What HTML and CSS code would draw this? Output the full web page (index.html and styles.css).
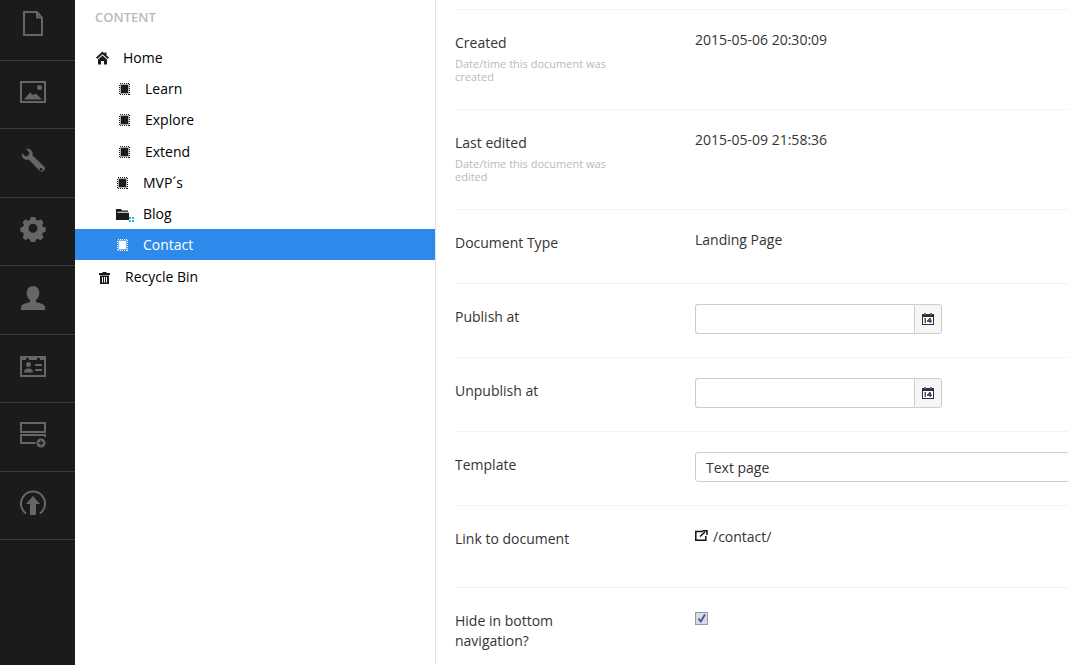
FILE: index.html
```html
<!DOCTYPE html>
<html lang="en">
<head>
<meta charset="utf-8">
<title>Contact</title>
<link rel="stylesheet" href="styles.css">
</head>
<body>
<div class="app">
  <nav class="rail">
    <a class="rail-item rail-first"><svg class="rail-icon" viewBox="0 0 30 30"><path d="M6 4h13l5 6v17H6z M19 5v4.500h4" fill="none" stroke="currentColor" stroke-width="2" stroke-linejoin="round"/></svg></a>
    <a class="rail-item"><svg class="rail-icon" viewBox="0 0 30 30"><rect x="3" y="5" width="24" height="20" fill="none" stroke="currentColor" stroke-width="2"/><path d="M6 22.500l6-7 3 2.500 3-1.500 6 6z" fill="currentColor"/><circle cx="21.500" cy="10.500" r="2.500" fill="currentColor"/></svg></a>
    <a class="rail-item"><svg class="rail-icon" viewBox="0 0 30 30"><path d="M4 8l3.500 3.500 3-1 1-3L8 4c3.500-.8 7.500 2 6.500 6.500L26 21.300c2.800 3-1.500 7.200-4.500 4.500L10.700 14.500C6.500 16 3 12 4 8z" fill="currentColor"/><circle cx="23" cy="24.500" r="1.400" fill="#1b1b1b"/></svg></a>
    <a class="rail-item"><svg class="rail-icon" viewBox="0 0 30 30"><path transform="translate(1.500 1.300) scale(.9)" fill="currentColor" fill-rule="evenodd" d="M12.500 2h5l.8 3 2.300 1 2.800-1.600 3.300 3.300-1.600 2.800 1 2.300 2.900.7v5l-2.900.7-1 2.300 1.600 2.800-3.300 3.300-2.800-1.600-2.300 1-.8 2.800h-5l-.8-2.800-2.300-1-2.800 1.600-3.300-3.300 1.600-2.800-1-2.300-2.900-.7v-5l2.900-.7 1-2.300-1.600-2.800 3.300-3.300 2.800 1.600 2.300-1zM15 9.500a5 5 0 1 0 0 10 5 5 0 0 0 0-10z"/></svg></a>
    <a class="rail-item"><svg class="rail-icon" viewBox="0 0 30 30"><path fill="currentColor" d="M15 4c4 0 6.300 3 6.300 7 0 3-1.200 5.500-3.300 7v2c3.500 1 8.500 2 9 4.500V28H3v-3.500C3.500 22 8.500 21 12 20v-2c-2.100-1.500-3.300-4-3.300-7 0-4 2.300-7 6.300-7z"/></svg></a>
    <a class="rail-item"><svg class="rail-icon" viewBox="0 0 30 30"><path d="M3 6h24v19H3z" fill="none" stroke="currentColor" stroke-width="2"/><path d="M4 7h4v2H4zM11 7h8v2h-8zM22 7h4v2h-4zM17 13h7v2h-7zM17 18h7v2h-7z" fill="currentColor"/><circle cx="10.500" cy="13.500" r="2.500" fill="currentColor"/><path d="M6 21.500c0-3 2-4 4.500-4s4.500 1 4.500 4z" fill="currentColor"/></svg></a>
    <a class="rail-item"><svg class="rail-icon" viewBox="0 0 30 30"><rect x="3" y="4" width="24" height="9" fill="none" stroke="currentColor" stroke-width="2"/><path d="M27 18v-2H3v8h15" fill="none" stroke="currentColor" stroke-width="2"/><circle cx="23" cy="24" r="5.500" fill="#1b1b1b"/><circle cx="23" cy="24" r="4.500" fill="currentColor"/><path d="M20.500 24h5M23 21.500v5" stroke="#1b1b1b" stroke-width="1.300"/></svg></a>
    <a class="rail-item"><svg class="rail-icon" viewBox="0 0 30 30"><path d="M8.200 25.500a12 12 0 1 1 13.600 0" fill="none" stroke="currentColor" stroke-width="2"/><path d="M15 8l7 8h-4v11h-6V16H8z" fill="currentColor"/></svg></a>
  </nav>

  <aside class="tree">
    <h5 class="tree-title">CONTENT</h5>
    <ul class="tree-list">
      <li class="node lvl-root"><svg class="node-icon" viewBox="0 0 14 14"><path d="M7.500 .5L1 6.500 2.200 8l5.300-4.800L12.800 8 14 6.500l-2.500-2.300V1.500h-2v1z" fill="#1b1b1b"/><path d="M3 8.500l4.500-4 4.500 4V13.500H9V10H6v3.500H3z" fill="#1b1b1b"/></svg><span>Home</span></li>
      <li class="node lvl-a"><svg class="node-icon" viewBox="0 0 14 14"><use href="#dots"/></svg><span>Learn</span></li>
      <li class="node lvl-a"><svg class="node-icon" viewBox="0 0 14 14"><use href="#dots"/></svg><span>Explore</span></li>
      <li class="node lvl-a"><svg class="node-icon" viewBox="0 0 14 14"><use href="#dots"/></svg><span>Extend</span></li>
      <li class="node lvl-b"><svg class="node-icon" viewBox="0 0 14 14"><use href="#dots"/></svg><span>MVP´s</span></li>
      <li class="node lvl-b"><svg class="node-icon node-folder" viewBox="0 0 16 14"><path d="M1 2h5l1 1.500h6v1.200H2.500v1H14V13H1z" fill="#1b1b1b"/><path d="M14 10h2v2h-2zM17 10h2v2h-2zM14 13h2v2h-2zM17 13h2v2h-2z" fill="#2bb4d8"/></svg><span>Blog</span></li>
      <li class="node lvl-b node-active"><svg class="node-icon" viewBox="0 0 14 14"><use href="#dots"/></svg><span>Contact</span></li>
      <li class="node lvl-bin"><svg class="node-icon" viewBox="0 0 14 14"><path d="M5.500 2h4v1H13v2H2V3h3.500zM3 5.500h9V14H3zM5 7v5.500h1V7zM7 7v5.500h1V7zM9 7v5.500h1V7z" fill="#1b1b1b" fill-rule="evenodd"/></svg><span>Recycle Bin</span></li>
    </ul>
    <svg class="defs" width="0" height="0"><defs><g id="dots" shape-rendering="crispEdges"><rect x="3" y="2" width="9" height="10" fill="currentColor" opacity=".35"/><rect x="4" y="3" width="7" height="8" fill="currentColor"/><rect x="2.500" y="1.500" width="10" height="11" fill="none" stroke="currentColor" stroke-dasharray="1 1"/></g></defs></svg>
  </aside>

  <main class="props">
    <section class="row row-tall">
      <div class="label"><div class="label-name">Created</div><small class="label-help">Date/time this document was created</small></div>
      <div class="value">2015-05-06 20:30:09</div>
    </section>
    <section class="row row-tall">
      <div class="label"><div class="label-name">Last edited</div><small class="label-help">Date/time this document was edited</small></div>
      <div class="value">2015-05-09 21:58:36</div>
    </section>
    <section class="row">
      <div class="label"><div class="label-name">Document Type</div></div>
      <div class="value">Landing Page</div>
    </section>
    <section class="row">
      <div class="label"><div class="label-name">Publish at</div></div>
      <div class="value"><div class="date"><input class="date-input" type="text"><span class="date-btn"><svg class="cal" viewBox="0 0 12 12"><use href="#cal"/></svg></span></div></div>
    </section>
    <section class="row">
      <div class="label"><div class="label-name">Unpublish at</div></div>
      <div class="value"><div class="date"><input class="date-input" type="text"><span class="date-btn"><svg class="cal" viewBox="0 0 12 12"><use href="#cal"/></svg></span></div></div>
    </section>
    <section class="row">
      <div class="label"><div class="label-name">Template</div></div>
      <div class="value"><div class="select">Text page</div></div>
    </section>
    <section class="row row-link">
      <div class="label"><div class="label-name">Link to document</div></div>
      <div class="value value-link"><svg class="ext" viewBox="0 0 13 11"><path d="M8 1.500H.8v8.700h10V6" fill="none" stroke="#111" stroke-width="1.500"/><path d="M5 6.500L10 2M7.500 .8H12v4.200" fill="none" stroke="#111" stroke-width="1.500"/></svg><span>/contact/</span></div>
    </section>
    <section class="row">
      <div class="label"><div class="label-name">Hide in bottom navigation?</div></div>
      <div class="value"><span class="check"><svg viewBox="0 0 11 11"><path d="M2.500 5.500l2.300 3L9 1.500" fill="none" stroke="#3f51a8" stroke-width="1.800"/></svg></span></div>
    </section>
    <svg class="defs" width="0" height="0"><defs><g id="cal"><path d="M0 1h12v11H0z" fill="#2b2f3a"/><rect x="1" y="4" width="10" height="7" fill="#fff"/><path d="M2 0h2v2H2zM8 0h2v2H8z" fill="#6d6a5f"/><path d="M2.500 5h1.500v5H2.500zM7.500 5H9v2.500h1V9H9v1H7.500V9H5V7.500z" fill="#3d5070"/></g></defs></svg>
  </main>
</div>
</body>
</html>
```
FILE: styles.css
```css
* { box-sizing: border-box; }
html, body { margin: 0; height: 100%; overflow: hidden; }
body { font-family: "Open Sans", "Liberation Sans", sans-serif; font-size: 14px; line-height: 20px; color: #343434; background: #fff; }
.app { display: flex; height: 665px; }

.rail { width: 75px; flex: none; background: #1b1b1b; overflow: hidden; }
.rail-item { display: flex; align-items: center; height: 68.5px; padding: 0 0 5px 18px; border-bottom: 1px solid #3a3a3a; color: #666; }
.rail-first { margin-top: -8px; }
.rail-icon { width: 30px; height: 30px; display: block; }

.tree { width: 361px; flex: none; border-right: 1px solid #e1e1e1; padding-top: 8px; }
.tree-title { margin: 0 0 0 20px; font-size: 13px; line-height: 18px; font-weight: 600; color: #bbb; }
.tree-list { list-style: none; margin: 15.800px 0 0; padding: 0; }
.node { display: flex; align-items: center; height: 31.25px; padding-top: .75px; color: #000; }
.node-icon { width: 14px; height: 14px; margin-right: 14px; flex: none; color: #1b1b1b; }
.node-folder { width: 16px; overflow: visible; }
.node-folder + span { margin-left: -2px; }
.lvl-root { padding-left: 20px; }
.lvl-a { padding-left: 42px; }
.lvl-b { padding-left: 40px; }
.lvl-bin { padding-left: 22px; }
.node-active { background: #2e8aea; color: #fff; height: 31px; margin-bottom: .25px; }
.node-active .node-icon { color: #fff; }
.defs { position: absolute; }

.props { flex: 1; min-width: 0; overflow: hidden; padding: 9px 0 0 19px; }
.row { display: flex; min-height: 74px; padding-top: 20px; border-top: 1px solid #f3f3f3; }
.row-tall { min-height: 100px; }
.row-link { min-height: 82px; }
.label { width: 240px; flex: none; padding: 3px 80px 0 0; color: #343434; }
.label-help { display: block; font-size: 11px; line-height: 13px; color: #b9b9b9; margin-top: 4px; }
.value { flex: none; width: 400px; color: #343434; }
.date { display: flex; width: 247px; height: 30px; }
.date-input { width: 219px; height: 30px; border: 1px solid #ccc; border-right: 0; border-radius: 3px 0 0 3px; background: #fff; padding: 0 10px; margin: 0; }
.date-btn { width: 28px; height: 30px; display: flex; align-items: center; justify-content: center; background: #f6f6f6; border: 1px solid #ccc; border-radius: 0 3px 3px 0; }
.cal { width: 12px; height: 12px; }
.select { height: 30px; border: 1px solid #ccc; border-radius: 3px 0 0 3px; padding: 5px 10px; line-height: 20px; }
.value-link { display: flex; align-items: center; height: 20px; margin-top: 1px; }
.ext { width: 13px; height: 11px; margin-right: 5px; margin-top: -3px; }
.check { display: block; width: 13px; height: 13px; margin-top: 4px; border: 1px solid #9a9a9a; background: #d8dbe6; padding: 0; }
.check svg { display: block; width: 11px; height: 11px; }
```
